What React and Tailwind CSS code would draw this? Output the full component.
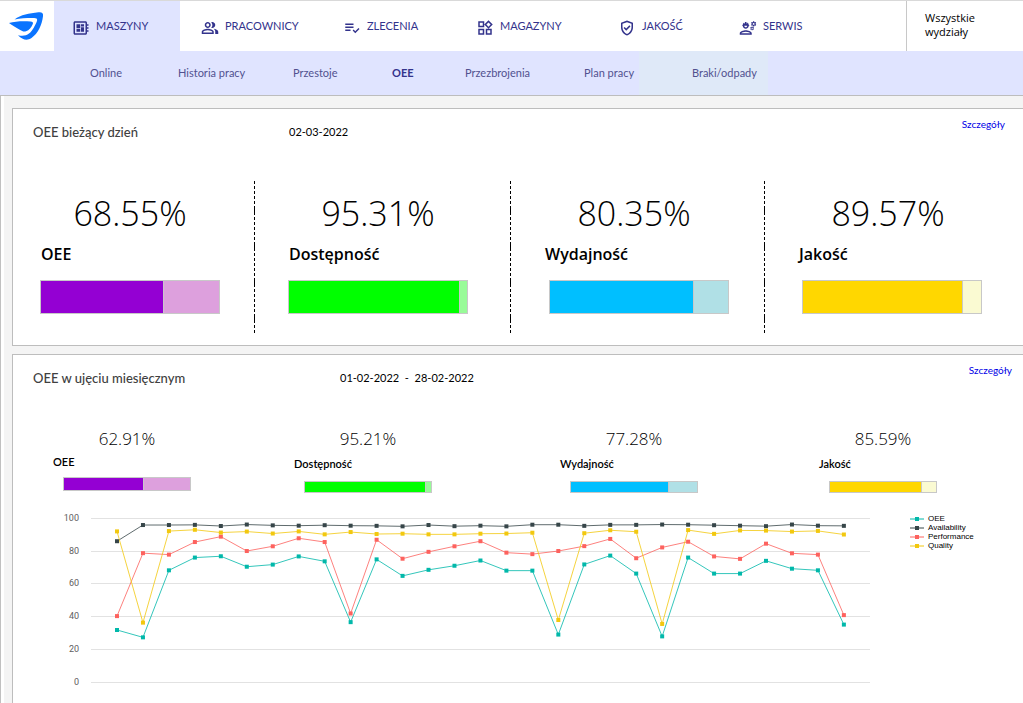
import React from "react";
import {
  MdOutlineDeveloperBoard,
  MdOutlinePeopleAlt,
  MdPlaylistAddCheck,
  MdOutlineWidgets,
  MdOutlineGppGood,
  MdOutlineEngineering,
} from "react-icons/md";

const TABS = [
  { label: "MASZYNY", Icon: MdOutlineDeveloperBoard, box: "w-[126px] pl-[18px] bg-[#e0e4ff]" },
  { label: "PRACOWNICY", Icon: MdOutlinePeopleAlt, box: "w-[142px] pl-[21px]" },
  { label: "ZLECENIA", Icon: MdPlaylistAddCheck, box: "w-[134px] pl-[21px]" },
  { label: "MAGAZYNY", Icon: MdOutlineWidgets, box: "w-[142px] pl-[20px]" },
  { label: "JAKOŚĆ", Icon: MdOutlineGppGood, box: "w-[121px] pl-[20px]" },
  { label: "SERWIS", Icon: MdOutlineEngineering, box: "w-[120px] pl-[20px]" },
];

const SUBTABS = [
  { label: "Online", box: "w-[88px]" },
  { label: "Historia pracy", box: "w-[115px]" },
  { label: "Przestoje", box: "w-[99px]" },
  { label: "OEE", box: "w-[73px]", active: true },
  { label: "Przezbrojenia", box: "w-[119px]" },
  { label: "Plan pracy", box: "w-[55px]" },
  { label: "Braki/odpady", box: "w-[129px] pl-[53px] bg-[#dfe9f8]" },
];

const DAILY = [
  { label: "OEE", value: 68.55, box: "w-[241px] pl-[27px]", bar: "", fill: "bg-[#9400d3]", rest: "bg-[#dda0dd]" },
  { label: "Dostępność", value: 95.31, box: "w-[255px] pl-[33px]", bar: "", fill: "bg-[#00ff00]", rest: "bg-[#98fb98]" },
  { label: "Wydajność", value: 80.35, box: "w-[253px] pl-[33px]", bar: "ml-[5px]", fill: "bg-[#00bfff]", rest: "bg-[#b0e0e6]" },
  { label: "Jakość", value: 89.57, box: "grow pl-[33px]", bar: "ml-1", fill: "bg-[#ffd700]", rest: "bg-[#fafad2]" },
];

const MONTHLY = [
  { label: "OEE", value: 62.91, box: "w-[241px]", gap: "pt-[5px]", bar: "mt-[7px] h-[14px]", size: "w-32", fill: "bg-[#9400d3]", rest: "bg-[#dda0dd]" },
  { label: "Dostępność", value: 95.21, box: "w-[266px]", gap: "pt-[7px]", bar: "mt-[9px] h-3", size: "w-32", fill: "bg-[#00ff00]", rest: "bg-[#98fb98]" },
  { label: "Wydajność", value: 77.28, box: "w-[259px]", gap: "pt-[7px]", bar: "mt-[9px] h-3", size: "w-32", fill: "bg-[#00bfff]", rest: "bg-[#b0e0e6]" },
  { label: "Jakość", value: 85.59, box: "grow", gap: "pt-[7px]", bar: "mt-[9px] h-3", size: "w-[108px]", fill: "bg-[#ffd700]", rest: "bg-[#fafad2]" },
];

const SERIES = [
  {
    name: "OEE",
    color: "#01b8aa",
    data: [31.5, 27, 68, 75.8, 76.6, 70.2, 71.5, 76.5, 73.5, 36.3, 74.7, 64.6, 68.3, 70.8, 74, 67.8, 67.8, 28.7, 71.6, 77, 66, 27.6, 75.8, 66, 66, 73.8, 69, 68, 34.8],
  },
  {
    name: "Availability",
    color: "#374649",
    data: [85.8, 95.7, 95.7, 95.8, 95.1, 96, 95.5, 95.3, 95.6, 95.3, 95.2, 94.9, 95.7, 95, 95.3, 94.9, 95.9, 95.9, 95.2, 95.8, 95.8, 96, 95.9, 95.6, 95.3, 95, 96, 95.3, 95.2],
  },
  {
    name: "Performance",
    color: "#fd625e",
    data: [40, 78.5, 77.6, 85.3, 88.6, 79.8, 82.7, 87.6, 85.3, 41.6, 86.7, 75.1, 79.3, 82.7, 85.8, 78.8, 77.9, 79.8, 82.8, 87.2, 75.4, 82, 85.5, 76.5, 75, 84.3, 78.4, 77.6, 40.6],
  },
  {
    name: "Quality",
    color: "#f2c80f",
    data: [91.8, 36, 92, 92.8, 91.1, 91.7, 90.5, 91.8, 90, 91.4, 90.2, 90.4, 90, 90, 90.4, 90.5, 91, 37.6, 90.7, 92.5, 91.6, 35.2, 92.6, 90.3, 92.4, 92.3, 91.7, 92.1, 89.9],
  },
];

const TICKS = [100, 80, 60, 40, 20, 0];

const xOf = (i) => 57 + i * 25.96;
const yOf = (v) => 9 + (100 - v) * 1.635;

function Logo() {
  return (
    <svg viewBox="0 0 36 30" className="h-[30px] w-9" role="img" aria-label="Logo">
      <path
        fill="#0a74ff"
        d="M5.5 8.400C12 3.800 20 2.300 29.500 1.300c3.400-.4 5 .8 4.500 4C32.900 14 29 22.500 22.500 27c-4.500 3-9 1.800-13.500-2.800 8.200 2 12.500-1.800 15.600-7.200 2-3.600 3.200-6 3.500-7.600.3-1.800-.8-2.500-3-2.500C18 6.800 12 7.200 5.500 8.400Z"
      />
      <path
        fill="#0a74ff"
        d="M0 12c6-1.900 14-2 21.500-1.600 2.100.1 3 1 2.300 2.600-1.500 3.400-3.500 6.500-6.800 7.300-2.400.6-4-.2-5.800-1.300C7.200 16.600 3.200 14.500 0 12Z"
      />
    </svg>
  );
}

function SplitBar({ value, fill, rest, className }) {
  return (
    <div className={`flex border border-[#c8c8c8] ${className}`} role="meter" aria-valuenow={value} aria-valuemin={0} aria-valuemax={100}>
      <div className={fill} style={{ width: `${value}%` }} />
      <div className={`grow border-l border-[#c8c8c8] ${rest}`} />
    </div>
  );
}

function Divider() {
  return (
    <svg className="h-[152px] w-px shrink-0" aria-hidden="true">
      <line x1="0.5" y1="0" x2="0.5" y2="152" stroke="#000" strokeWidth="1" strokeDasharray="3 2 3 2 3 2 3 2 3 2 9 2" />
    </svg>
  );
}

function Chart() {
  return (
    <svg className="h-[190px] w-[812px] shrink-0" viewBox="0 0 812 190" role="img" aria-label="OEE chart">
      {TICKS.map((t) => (
        <g key={t}>
          <line x1="31" x2="810" y1={Math.round(yOf(t)) + 0.5} y2={Math.round(yOf(t)) + 0.5} stroke="#e2e2e2" />
          <text x="19" y={Math.round(yOf(t)) + 3} textAnchor="end" fill="#606060" className="font-[Roboto,sans-serif] text-[9px]">
            {t}
          </text>
        </g>
      ))}
      {SERIES.map((s) => (
        <g key={s.name}>
          <polyline
            fill="none"
            stroke={s.color}
            strokeWidth="1"
            strokeOpacity="0.8"
            points={s.data.map((v, i) => `${xOf(i)},${yOf(v)}`).join(" ")}
          />
          {s.data.map((v, i) => (
            <rect key={i} x={xOf(i) - 2} y={yOf(v) - 2} width="4" height="4" fill={s.color} />
          ))}
        </g>
      ))}
    </svg>
  );
}

export default function App() {
  return (
    <div className="flex min-h-screen flex-col bg-white font-[Lato,'Noto_Sans',sans-serif] text-black">
      <header className="flex h-[51px] border-t border-[#d9d9d9]">
        <div className="flex w-[54px] shrink-0 items-center justify-center">
          <Logo />
        </div>
        <nav className="flex grow" aria-label="Moduły">
          {TABS.map(({ label, Icon, box }) => (
            <a key={label} href="#" className={`flex shrink-0 items-center gap-1.5 text-[11px] text-[#33338c] ${box}`}>
              <Icon className="mt-1 size-[18px]" />
              {label}
            </a>
          ))}
        </nav>
        <button type="button" className="w-[117px] shrink-0 border-l border-[#c8c8c8] pb-[2px] pl-[18px] text-left font-['Open_Sans',sans-serif] text-[11px] leading-[14px] font-medium">
          Wszystkie
          <br />
          wydziały
        </button>
      </header>

      <nav className="flex h-[45px] border-b border-[#bdbdbd] bg-[#e0e4ff] pl-[90px] text-[11px] text-[#51518f]" aria-label="Maszyny">
        {SUBTABS.map(({ label, box, active }) => (
          <a key={label} href="#" className={`flex shrink-0 items-center whitespace-nowrap ${box} ${active ? "font-bold text-[#33338c]" : ""}`}>
            {label}
          </a>
        ))}
      </nav>

      <main className="flex grow border-l border-[#c0c0c0] pl-[3px]">
        <div className="flex grow flex-col gap-2 bg-[#f4f4f4] pt-3 pl-2">
          <section className="h-[238px] border-y border-l border-[#bdbdbd] bg-white">
            <div className="flex h-[72px] pt-[15px] pl-5">
              <h2 className="w-64 text-[13px] leading-4 font-medium text-[#404040]">OEE bieżący dzień</h2>
              <time className="grow text-[11px] leading-4">02-03-2022</time>
              <a href="#" className="-mt-2 pr-[18px] text-[10px] leading-4 text-[#0000e6]">Szczegóły</a>
            </div>
            <div className="flex">
              {DAILY.map((d, i) => (
                <React.Fragment key={d.label}>
                  {i > 0 && <Divider />}
                  <div className={`shrink-0 ${d.box}`}>
                    <div className="w-[180px] pt-3 text-center font-['Open_Sans',sans-serif] text-[34px] leading-10 font-light">{d.value}%</div>
                    <h3 className="pt-[11px] pl-px font-['Open_Sans',sans-serif] text-base leading-5 font-semibold">{d.label}</h3>
                    <SplitBar {...d} className={`mt-4 h-[34px] w-[180px] ${d.bar}`} />
                  </div>
                </React.Fragment>
              ))}
            </div>
          </section>

          <section className="grow border-t border-l border-[#bdbdbd] bg-white">
            <div className="flex h-[74px] pt-[15px] pl-5">
              <h2 className="w-[307px] text-[13px] leading-4 font-medium text-[#404040]">OEE w ujęciu miesięcznym</h2>
              <p className="grow text-[11px] leading-4 whitespace-pre">01-02-2022  -  28-02-2022</p>
              <a href="#" className="-mt-2 pr-[11px] text-[10px] leading-4 text-[#0000e6]">Szczegóły</a>
            </div>
            <div className="flex pl-10">
              {MONTHLY.map((d) => (
                <div key={d.label} className={`shrink-0 ${d.box}`}>
                  <div className={`ml-[10px] text-center font-['Open_Sans',sans-serif] text-[17px] leading-5 font-light ${d.size}`}>{d.value}%</div>
                  <h3 className={`text-[11px] leading-4 font-semibold ${d.gap}`}>{d.label}</h3>
                  <SplitBar {...d} className={`ml-[10px] ${d.bar} ${d.size}`} />
                </div>
              ))}
            </div>
            <div className="flex pt-4 pl-[47px]">
              <Chart />
              <ul className="mt-[5px] ml-[38px] font-['Liberation_Sans',sans-serif] text-[8px] leading-[9px]">
                {SERIES.map((s) => (
                  <li key={s.name} className="flex items-center gap-1">
                    <svg className="h-1 w-[14px]" aria-hidden="true">
                      <path d="M0 2h14" stroke={s.color} />
                      <rect x="5" width="4" height="4" fill={s.color} />
                    </svg>
                    {s.name}
                  </li>
                ))}
              </ul>
            </div>
          </section>
        </div>
      </main>
    </div>
  );
}
